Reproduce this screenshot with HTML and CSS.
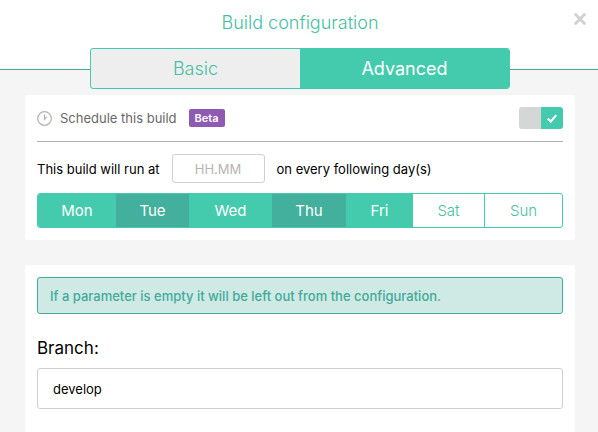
FILE: index.html
```html
<!DOCTYPE html>
<html lang="en">
<head>
<meta charset="utf-8">
<title>Build configuration</title>
<link rel="stylesheet" href="styles.css">
</head>
<body>
<header class="header">
  <h1 class="title">Build configuration</h1>
  <button class="close" type="button" aria-label="Close">
    <svg width="12" height="12" viewBox="0 0 12 12"><path d="M1.6 1.6l8.8 8.8M10.4 1.6l-8.8 8.8" fill="none" stroke="#d0d0d0" stroke-width="2.8" stroke-linecap="round"/></svg>
  </button>
</header>
<nav class="tabs">
  <button class="tab" type="button">Basic</button>
  <button class="tab tab-active" type="button">Advanced</button>
</nav>
<main class="content">
  <section class="panel">
    <div class="schedule">
      <svg width="15" height="15" viewBox="0 0 15 15" fill="none" stroke="#b5b5b5"><circle cx="7.5" cy="7.5" r="6.8" stroke-width="1.3"/><path d="M7.5 3.5v5l2.3-2.6" stroke-width="1.2"/></svg>
      <label class="schedule-label" for="schedule">Schedule this build</label>
      <span class="badge">Beta</span>
      <span class="toggle">
        <input class="toggle-input" type="checkbox" id="schedule" checked>
        <svg class="toggle-check" width="10" height="9" viewBox="0 0 10 9"><path d="M0.8 4.6l2.9 3L9.2 1.1" fill="none" stroke="#fff" stroke-width="2.2"/></svg>
      </span>
    </div>
    <div class="time">
      <label for="time">This build will run at</label>
      <input class="field time-input" type="text" id="time" placeholder="HH.MM">
      <span>on every following day(s)</span>
    </div>
    <div class="days">
      <button class="day day-on" type="button">Mon</button>
      <button class="day day-on day-dark" type="button">Tue</button>
      <button class="day day-on" type="button">Wed</button>
      <button class="day day-on day-dark" type="button">Thu</button>
      <button class="day day-on" type="button">Fri</button>
      <button class="day" type="button">Sat</button>
      <button class="day day-last" type="button">Sun</button>
    </div>
  </section>
  <section class="panel panel-params">
    <p class="notice">If a parameter is empty it will be left out from the configuration.</p>
    <label class="branch-label" for="branch">Branch:</label>
    <input class="field branch-input" type="text" id="branch" value="develop">
  </section>
</main>
</body>
</html>
```
FILE: styles.css
```css
* {
  box-sizing: border-box;
}

body {
  margin: 0;
  min-height: 100vh;
  display: flex;
  flex-direction: column;
  background: #f5f5f5;
  color: #000;
  font-family: Inter, "Liberation Sans", sans-serif;
  font-size: 13px;
  line-height: 20px;
}

button,
input {
  margin: 0;
  padding: 0;
  border: 0;
  border-radius: 0;
  background: none;
  font: inherit;
}

.header {
  position: relative;
  padding: 13px 0 36px 2px;
  border-bottom: 1px solid #43ab99;
  background: #fff;
}

.title {
  margin: 0;
  color: #44bfa3;
  font-size: 18px;
  font-weight: 300;
  text-align: center;
}

.close {
  position: absolute;
  top: 13px;
  right: 12px;
  display: flex;
}

.tabs {
  position: relative;
  display: flex;
  margin: -22px 88px 6px 90px;
  border: 1px solid #44cbad;
  border-radius: 3px;
  background: #eee;
  overflow: hidden;
}

.tab {
  flex: 1;
  height: 39px;
  color: #44bfa3;
  font-size: 18px;
  font-weight: 300;
}

.tab-active {
  background: #44cbad;
  color: #fff;
  font-weight: 400;
}

.content {
  flex: 1;
  display: flex;
  flex-direction: column;
  gap: 25px;
  padding: 0 23px 0 25px;
}

.panel {
  padding: 12px;
  border-radius: 3px;
  background: #fff;
}

.panel-params {
  flex: 1;
  border-radius: 3px 3px 0 0;
}

.schedule {
  display: flex;
  align-items: center;
  padding-bottom: 12px;
  border-bottom: 1px solid #b0b0b0;
}

.schedule-label {
  margin: 0 12px 0 8px;
  color: #686868;
}

.badge {
  padding: 0 6px;
  border-radius: 2px;
  background: #8e5ab2;
  color: #fff;
  font-size: 11px;
  font-weight: 600;
  line-height: 18px;
}

.toggle {
  position: relative;
  display: flex;
  margin-left: auto;
}

.toggle-input {
  width: 44px;
  height: 22px;
  border-radius: 3px;
  appearance: none;
  background: linear-gradient(to right, #d5d7d6 50%, #44cbad 50%);
}

.toggle-check {
  position: absolute;
  top: 7px;
  right: 6px;
}

.time {
  display: flex;
  align-items: center;
  gap: 12px;
  padding: 12px 0 10px;
}

.field {
  border: 1px solid #d0d0d0;
  border-radius: 3px;
  background: #fff;
  color: #000;
}

.time-input {
  width: 93px;
  height: 29px;
  text-align: center;
}

.time-input::placeholder {
  color: #b5b5b5;
}

.days {
  display: grid;
  grid-template-columns: 78fr 73fr 83fr 74fr 67fr 72fr 77fr;
  border: 1px solid #44cbad;
  border-radius: 3px;
  overflow: hidden;
}

.day {
  height: 33px;
  border-right: 1px solid #44cbad;
  color: #44bfa3;
  font-size: 15px;
  font-weight: 300;
}

.day-on {
  border-right: 0;
  background: #44cbad;
  color: #fff;
  font-weight: 400;
}

.day-dark {
  background: #43af9d;
}

.day-last {
  border-right: 0;
}

.notice {
  margin: 0 0 24px;
  padding: 8px 12px 7px;
  border: 1px solid #43ab99;
  border-radius: 3px;
  background: #cfe9e5;
  color: #43ab99;
  font-weight: 500;
}

.branch-label {
  display: block;
  margin-bottom: 10px;
  font-size: 17px;
}

.branch-input {
  display: block;
  width: 100%;
  height: 41px;
  padding: 0 15px;
}
```
